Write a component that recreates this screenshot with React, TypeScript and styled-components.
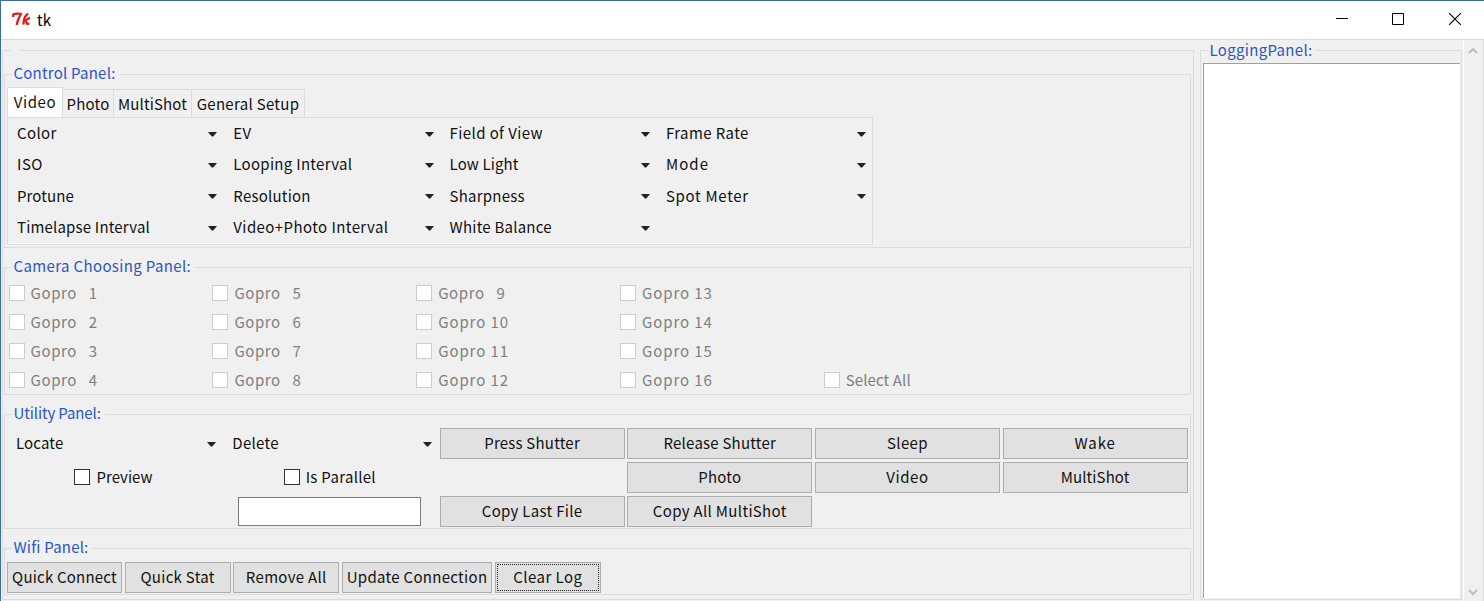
import React from "react";
import styled, { createGlobalStyle, css } from "styled-components";

const GlobalStyle = createGlobalStyle`
  * { box-sizing: border-box; }
  body { margin: 0; background: #f0f0f0; overflow: hidden; }
  button, input { font: inherit; }
`;

const Window = styled.div`
  display: flex;
  flex-direction: column;
  width: 1484px;
  height: 601px;
  border-top: 1px solid #3a6e97;
  border-left: 1px solid #3a6e97;
  background: #f0f0f0;
  color: #111;
  font: 15px/20px "Noto Sans CJK SC", "Noto Sans", sans-serif;
  white-space: pre;
`;

const TitleBar = styled.header`
  display: flex;
  align-items: center;
  height: 39px;
  flex: none;
  padding: 0 1px 2px 10px;
  background: #fff;
  border-bottom: 1px solid #d9d9d9;
`;

const Title = styled.span`
  flex: 1;
  margin-left: 6px;
  padding-top: 1px;
  color: #000;
`;

const WindowButton = styled.span`
  display: flex;
  justify-content: center;
  width: 56.5px;
`;

const Body = styled.main`
  display: flex;
  flex: 1;
  align-items: flex-start;
  padding-left: 1px;
`;

const Group = styled.fieldset<{ $height: number; $gap?: number }>`
  margin: 0 0 ${(p) => p.$gap ?? 0}px;
  padding: 0 2px;
  min-width: 0;
  height: ${(p) => p.$height}px;
  border: 1px solid #dcdcdc;
`;

const Legend = styled.legend<{ $line?: number }>`
  height: 20px;
  margin-left: 5px;
  padding: 0 4px 0 1.5px;
  line-height: ${(p) => p.$line ?? 18}px;
  color: #2a56c6;
`;

const Left = styled(Group)`
  width: 1192px;
  margin-top: 10px;
  padding: 0 2px 0 1px;
`;

const BlankLegend = styled.legend`
  width: 9px;
  height: 1px;
  margin-left: 7px;
  padding: 0;
`;

const Stack = styled.div`
  display: flex;
  flex-direction: column;
  padding-top: 13px;
`;

const Label = styled.span<{ $spacing: number }>`
  letter-spacing: ${(p) => p.$spacing}px;
`;

const spacing: Record<string, number> = {
  "General Setup": 0.3, Video: 0.6, MultiShot: 0.12,
  Color: 0.4, EV: 0.4, "Field of View": 0.4, "Frame Rate": 0.4,
  ISO: 0.5, "Looping Interval": 0.3, "Low Light": 0.12, Mode: 1.1, Protune: 0.1,
  "Spot Meter": 0.7, "Timelapse Interval": 0.18, "Video+Photo Interval": 0.42,
  "Camera Choosing Panel:": 0.37, "Select All": 0.1,
  "Utility Panel:": -0.12, "Wifi Panel:": 0.2, Locate: 0.15, Preview: 0.05,
  Wake: 0.9, "Copy Last File": 0.3, "Copy All MultiShot": 0.33,
  "Quick Stat": 0.3, "Remove All": 0.3, "Update Connection": 0.3,
  "Clear Log": 0.45, "LoggingPanel:": 0.32, "Is Parallel": 0.3,
  Sleep: 0.35, Delete: 0.3,
};

const Text = ({ children }: { children: string }) => {
  const fallback = children.startsWith("Gopro") ? (children.length > 8 ? 0.58 : 0.9) : 0.22;
  return <Label $spacing={spacing[children] ?? fallback}>{children}</Label>;
};

const Tabs = styled.div`
  display: flex;
  align-items: flex-end;
  height: 33px;
`;

const Tab = styled.div<{ $width: number; $active?: boolean }>`
  display: flex;
  justify-content: center;
  align-items: center;
  width: ${(p) => p.$width}px;
  height: 28px;
  border: 1px solid #dcdcdc;
  border-width: 1px 1px 0 0;
  ${(p) =>
    p.$active &&
    css`
      height: 30px;
      padding-bottom: 1px;
      background: #fff;
      border-left-width: 1px;
    `}
`;

const TabPanel = styled.div`
  display: grid;
  grid-template-columns: repeat(4, 216.3px);
  grid-template-rows: repeat(4, 31.3px);
  width: 866px;
  height: 128px;
  border: 1px solid #dcdcdc;
  box-shadow: inset 0 -1px #fff;
`;

const Menu = styled.div<{ $right: number }>`
  display: flex;
  align-items: center;
  justify-content: space-between;
  padding: 0 ${(p) => p.$right}px 1px 9px;
`;

const ArrowIcon = styled.svg`
  display: block;
  margin-top: 2px;
`;

const Arrow = () => (
  <ArrowIcon width="9" height="5" viewBox="0 0 9 5">
    <path d="M0 0h9L5.2 4.6H3.8z" fill="#222" />
  </ArrowIcon>
);

const Check = styled.label<{ $disabled?: boolean; $pad?: number }>`
  display: flex;
  align-items: center;
  gap: 6px;
  padding-left: ${(p) => p.$pad ?? 0}px;
  color: ${(p) => (p.$disabled ? "#7f7f7f" : "#111")};
`;

const Box = styled.span<{ $disabled?: boolean }>`
  width: 16px;
  height: 16px;
  border: 1px solid ${(p) => (p.$disabled ? "#cccccc" : "#333")};
  background: #fff;
`;

const CameraGrid = styled.div`
  display: grid;
  grid-auto-flow: column;
  grid-template-rows: repeat(4, 28.8px);
  grid-template-columns: repeat(5, 203.8px);
  padding: 2px 0 0 1.6px;
`;

const SelectAll = styled(Check)`
  grid-row: 4;
`;

const UtilityGrid = styled.div`
  display: grid;
  grid-template-columns: 213.6px 213.6px repeat(4, 185px);
  grid-template-rows: repeat(3, 31px);
  column-gap: 2.7px;
  row-gap: 2.8px;
  padding-top: 4px;
`;

const Button = styled.button<{ $width?: number; $col?: number }>`
  position: relative;
  display: flex;
  align-items: center;
  justify-content: center;
  height: 31px;
  width: ${(p) => (p.$width ? `${p.$width}px` : "auto")};
  grid-column: ${(p) => p.$col ?? "auto"};
  padding: 0 0 1px;
  border: 1px solid #adadad;
  background: #e1e1e1;
  color: #111;
`;

const FocusRing = styled.span`
  position: absolute;
  inset: 1px;
  border: 1px dotted #222;
`;

const Field = styled.input`
  width: 183px;
  height: 29px;
  margin: 1px 0 0 15px;
  grid-column: 2;
  border: 1px solid #7a7a7a;
  background: #fff;
`;

const ButtonRow = styled.div`
  display: flex;
  gap: 2.6px;
  padding-top: 4px;
`;

const LogGroup = styled(Group)`
  width: 262px;
  margin-left: 6px;
`;

const LogText = styled.div`
  width: 257px;
  height: 535px;
  margin-top: 3px;
  background: #fff;
  border: 1px solid #a0a0a0;
  border-width: 1px 0 0 1px;
`;

const ScrollBar = styled.div`
  display: flex;
  flex-direction: column;
  justify-content: space-between;
  align-items: center;
  width: 21px;
  height: 561px;
  margin-left: 1px;
  padding: 7px 2px 5px 0;
  border-left: 1px solid #fff;
  border-right: 1px solid #dcdcdc;
`;

const Chevron = ({ down }: { down?: boolean }) => (
  <svg width="10" height="7" viewBox="0 0 10 7">
    <path d={down ? "M1 1l4 4 4-4" : "M1 6l4-4 4 4"} fill="none" stroke="#bfbfbf" strokeWidth="2.2" />
  </svg>
);

const TkLogo = () => (
  <svg width="20" height="16" viewBox="0 0 20 16" fill="none" stroke="#e01b1b" strokeLinejoin="round">
    <path d="M2.2 6L2.2 3.4Q5 2.4 10 2.8Q7 7.4 5.6 14" strokeWidth="2.2" />
    <path d="M17 2.4L14 5.8Q12.6 8.6 12.4 13.6" strokeWidth="2.2" />
    <path d="M19 6.8L14.4 9.4L16 12.8L18.4 12.6" strokeWidth="2.2" />
  </svg>
);

const menus = [
  "Color", "EV", "Field of View", "Frame Rate",
  "ISO", "Looping Interval", "Low Light", "Mode",
  "Protune", "Resolution", "Sharpness", "Spot Meter",
  "Timelapse Interval", "Video+Photo Interval", "White Balance",
];

const cameras = Array.from({ length: 16 }, (_, i) => i + 1);

const DropDown = ({ text, right = 7 }: { text: string; right?: number }) => (
  <Menu $right={right}>
    <Text>{text}</Text>
    <Arrow />
  </Menu>
);

export default function App() {
  return (
    <Window>
      <GlobalStyle />
      <TitleBar>
        <TkLogo />
        <Title>tk</Title>
        <WindowButton>
          <svg width="12" height="12"><path d="M0 5.5h12" stroke="#000" /></svg>
        </WindowButton>
        <WindowButton>
          <svg width="12" height="12"><path d="M.5.5h11v11H.5z" fill="none" stroke="#000" /></svg>
        </WindowButton>
        <WindowButton>
          <svg width="12" height="12"><path d="M0 0l12 12M12 0L0 12" stroke="#000" strokeWidth="1.1" /></svg>
        </WindowButton>
      </TitleBar>
      <Body>
        <Left $height={550}>
          <BlankLegend />
          <Stack>
            <Group $height={184} $gap={9}>
              <Legend><Text>Control Panel:</Text></Legend>
              <Tabs>
                <Tab $width={56} $active><Text>Video</Text></Tab>
                <Tab $width={51}><Text>Photo</Text></Tab>
                <Tab $width={78}><Text>MultiShot</Text></Tab>
                <Tab $width={113}><Text>General Setup</Text></Tab>
              </Tabs>
              <TabPanel>
                {menus.map((m) => <DropDown key={m} text={m} />)}
              </TabPanel>
            </Group>
            <Group $height={138} $gap={9}>
              <Legend><Text>Camera Choosing Panel:</Text></Legend>
              <CameraGrid>
                {cameras.map((n) => (
                  <Check key={n} $disabled>
                    <Box $disabled />
                    <Text>{`Gopro ${n < 10 ? "  " : ""}${n}`}</Text>
                  </Check>
                ))}
                <SelectAll $disabled>
                  <Box $disabled />
                  <Text>Select All</Text>
                </SelectAll>
              </CameraGrid>
            </Group>
            <Group $height={125} $gap={9}>
              <Legend><Text>Utility Panel:</Text></Legend>
              <UtilityGrid>
                <DropDown text="Locate" right={5} />
                <DropDown text="Delete" right={5} />
                <Button><Text>Press Shutter</Text></Button>
                <Button><Text>Release Shutter</Text></Button>
                <Button><Text>Sleep</Text></Button>
                <Button><Text>Wake</Text></Button>
                <Check $pad={67.4}><Box /><Text>Preview</Text></Check>
                <Check $pad={60.4}><Box /><Text>Is Parallel</Text></Check>
                <Button $col={4}><Text>Photo</Text></Button>
                <Button><Text>Video</Text></Button>
                <Button><Text>MultiShot</Text></Button>
                <Field />
                <Button><Text>Copy Last File</Text></Button>
                <Button><Text>Copy All MultiShot</Text></Button>
              </UtilityGrid>
            </Group>
            <Group $height={57}>
              <Legend><Text>Wifi Panel:</Text></Legend>
              <ButtonRow>
                <Button $width={115}><Text>Quick Connect</Text></Button>
                <Button $width={106}><Text>Quick Stat</Text></Button>
                <Button $width={106}><Text>Remove All</Text></Button>
                <Button $width={150.5}><Text>Update Connection</Text></Button>
                <Button $width={106}><Text>Clear Log</Text><FocusRing /></Button>
              </ButtonRow>
            </Group>
          </Stack>
        </Left>
        <LogGroup $height={560}>
          <Legend $line={20}><Text>LoggingPanel:</Text></Legend>
          <LogText />
        </LogGroup>
        <ScrollBar>
          <Chevron />
          <Chevron down />
        </ScrollBar>
      </Body>
    </Window>
  );
}
